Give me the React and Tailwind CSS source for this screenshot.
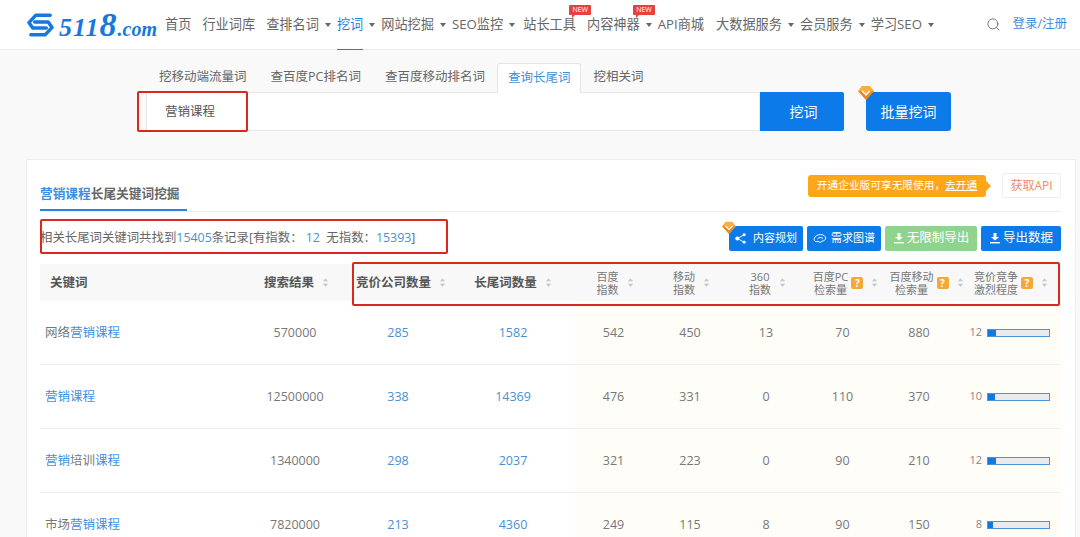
import { Search } from "lucide-react";

const navItems = [
  { label: "首页", mr: "mr-[11px]" },
  { label: "行业词库", mr: "mr-[11px]" },
  { label: "查排名词", caret: true },
  { label: "挖词", caret: true, active: true },
  { label: "网站挖掘", caret: true },
  { label: "SEO监控", caret: true, mr: "mr-[8px]" },
  { label: "站长工具", badge: true, mr: "mr-[11px]" },
  { label: "内容神器", caret: true, badge: true },
  { label: "API商城", mr: "mr-[12px]" },
  { label: "大数据服务", caret: true },
  { label: "会员服务", caret: true },
  { label: "学习SEO", caret: true },
];

const tabs = [
  { label: "挖移动端流量词" },
  { label: "查百度PC排名词" },
  { label: "查百度移动排名词" },
  { label: "查询长尾词", active: true },
  { label: "挖相关词" },
];

const rows = [
  { pre: "网络", hit: "营销课程", post: "", results: "570000", firms: "285", long: "1582", baidu: "542", mobile: "450", s360: "13", pc: "70", mob: "880", level: 12 },
  { pre: "", hit: "营销课程", post: "", results: "12500000", firms: "338", long: "14369", baidu: "476", mobile: "331", s360: "0", pc: "110", mob: "370", level: 10 },
  { pre: "", hit: "营销", post: "培训", hit2: "课程", results: "1340000", firms: "298", long: "2037", baidu: "321", mobile: "223", s360: "0", pc: "90", mob: "210", level: 12 },
  { pre: "市场", hit: "营销课程", post: "", results: "7820000", firms: "213", long: "4360", baidu: "249", mobile: "115", s360: "8", pc: "90", mob: "150", level: 8 },
];

const columns = "grid grid-cols-[205px_100px_106px_124px_77px_76px_76px_77px_76px_104px]";

function Diamond({ className }) {
  return (
    <svg viewBox="0 0 16 15" className={className}>
      <path d="M4 1h8l4 5-8 9-8-9z" fill="#f5b041" />
      <path d="M4 6l4 4 4-4" fill="none" stroke="#fff" strokeWidth="1.6" />
      <path d="M0 6l8 9 8-9-3 0-5 5-5-5z" fill="#e8872a" />
    </svg>
  );
}

function Caret() {
  return <span className="ml-[6px] h-0 w-0 border-x-[3px] border-t-[4px] border-x-transparent border-t-[#666]" />;
}

function NewBadge() {
  return (
    <span className="absolute left-[46px] top-[5px] h-[10px] w-[22px] rounded-[1px] bg-[#e8403f] text-center text-[7px] leading-[10px] text-white">
      NEW
      <span className="absolute left-[3px] top-[10px] h-0 w-0 border-r-[3px] border-t-[3px] border-r-transparent border-t-[#e8403f]" />
    </span>
  );
}

function Sort() {
  return (
    <svg viewBox="0 0 8 12" className="ml-[8px] h-[11px] w-[7px] shrink-0" fill="#c4c8cc">
      <path d="M4 1l3 3.5H1z" />
      <path d="M4 11L1 7.5h6z" />
    </svg>
  );
}

function Help() {
  return (
    <span className="ml-[3px] h-[12px] w-[12px] shrink-0 rounded-[2px] bg-[#f5a83a] text-center text-[10px] font-bold leading-[12px] text-white">?</span>
  );
}

function DownloadIcon() {
  return (
    <svg viewBox="0 0 12 12" className="mr-[2px] h-[12px] w-[12px]" fill="#fff">
      <path d="M4.500 1h3v4H10L6 8.600 2 5h2.500z" />
      <rect x="1" y="10" width="10" height="1.400" />
    </svg>
  );
}

function Bar({ level }) {
  const width = level === 12 ? "w-[8px]" : level === 10 ? "w-[7px]" : "w-[5px]";
  return (
    <div className="flex items-center">
      <span className="w-[30px] pr-[5px] text-right text-[11px] text-[#888]">{level}</span>
      <div className="h-[8px] w-[63px] border border-[#4a94dc] bg-[#e9eaec]">
        <div className={`h-full bg-[#0f78e6] ${width}`} />
      </div>
    </div>
  );
}

export default function App() {
  return (
    <div className="relative h-[537px] w-[1080px] overflow-hidden bg-[#f9f9f9] text-[#666] [font-family:'Open_Sans','Noto_Sans_CJK_SC',sans-serif]">
      {/* Header */}
      <header className="flex h-[50px] items-center border-b border-[#eceef0] bg-white pl-[26px] pr-[13px] text-[13.2px]">
        <svg viewBox="0 0 30 26" className="h-[26px] w-[29px]" fill="none" stroke="#1678dc" strokeWidth="3.600" strokeLinejoin="round" strokeLinecap="round">
          <path d="M25 3H10L3 10.500 7 16H21" />
          <path d="M5 23H20L27 15.500 23 10H9" />
        </svg>
        <div className="ml-[4px] flex w-[106px] items-baseline font-bold italic text-[#1678dc] [font-family:'Liberation_Serif',serif]">
          <span className="text-[26px] leading-none tracking-[1px]">511<span className="text-[34px] leading-none">8</span></span>
          <span className="text-[20px] leading-none">.com</span>
        </div>
        <nav className="flex h-full items-center">
          {navItems.map((item) => (
            <div
              key={item.label}
              className={`relative flex h-full items-center whitespace-nowrap ${item.mr || "mr-[6px]"} ${item.active ? "text-[#1f80e0]" : ""}`}
            >
              {item.label}
              {item.caret && <Caret />}
              {item.badge && <NewBadge />}
              {item.active && <span className="absolute bottom-[-1px] left-0 h-[1px] w-[26px] bg-[#1f80e0]" />}
            </div>
          ))}
        </nav>
        <Search className="ml-auto mr-[11px] h-[15px] w-[15px] text-[#666]" strokeWidth={1.4} />
        <span className="text-[12.5px] text-[#3f8fe0]">登录/注册</span>
      </header>

      {/* Search */}
      <section className="ml-[146px] flex w-[805px] flex-col pt-[12px]">
        <div className="flex h-[30px] items-stretch pl-[1px] pt-[1px] text-[12.5px]">
          {tabs.map((tab) => (
            <div
              key={tab.label}
              className={
                tab.active
                  ? "z-10 -mb-px flex items-center rounded-t-[3px] border border-b-0 border-[#e4e4e4] bg-white px-[10px] text-[#3f8fe0]"
                  : "flex items-center px-[12px]"
              }
            >
              {tab.label}
            </div>
          ))}
        </div>
        <div className="flex h-[39px]">
          <div className="flex w-[614px] items-center border border-[#e8e8e8] bg-white pl-[18px] pt-[2px] text-[12.5px] text-[#555]">营销课程</div>
          <button className="w-[84px] rounded-r-[2px] bg-[#0c7ae8] pl-[3px] text-[14px] text-white">挖词</button>
          <button className="relative ml-[22px] w-[85px] rounded-[3px] bg-[#0c7ae8] text-[14px] text-white">
            批量挖词
            <Diamond className="absolute left-[-8px] top-[-7px] h-[15px] w-[16px]" />
          </button>
        </div>
      </section>

      {/* Card */}
      <main className="ml-[26px] mt-[28px] w-[1050px] border border-[#eeeeee] bg-white pl-[13px] pr-[14px]">
        <div className="flex h-[52px] items-end justify-between border-b border-[#eeeeee]">
          <div className="flex h-[52px] w-[147px] items-end border-b-2 border-[#2b84e0] pb-[6px] text-[12.7px] font-bold">
            <span className="text-[#3f8fe0]">营销课程</span>
            <span>长尾关键词挖掘</span>
          </div>
          <div className="mb-[13px] flex items-center">
            <div className="relative flex h-[22px] w-[178px] items-center justify-center whitespace-nowrap rounded-[3px] bg-[#fca71a] text-[10.7px] text-white">
              <span>开通企业版可享无限使用，<span className="underline">去开通</span></span>
              <span className="absolute right-[-5px] h-0 w-0 border-y-[5px] border-l-[5px] border-y-transparent border-l-[#fca71a]" />
            </div>
            <div className="ml-[16px] flex h-[25px] w-[59px] items-center justify-center rounded-[2px] border border-[#eeeeee] text-[12px] text-[#ee8a6c]">获取API</div>
          </div>
        </div>

        <div className="flex h-[52px] items-center justify-between">
          <p className="text-[12.4px]">
            相关长尾词关键词共找到<span className="text-[#4a8fd3]">15405</span>条记录[有指数：<span className="text-[#4a8fd3]"> 12</span>&nbsp; 无指数：<span className="text-[#4a8fd3]">15393</span>]
          </p>
          <div className="flex gap-[4px] text-white">
            <button className="relative flex h-[25px] w-[74px] items-center justify-center rounded-[2px] bg-[#0c7ae8] text-[11px]">
              <svg viewBox="0 0 12 12" className="mr-[7px] h-[11px] w-[11px]" fill="#fff">
                <circle cx="2.500" cy="6" r="2.200" />
                <circle cx="10" cy="2" r="1.600" />
                <circle cx="10" cy="10" r="1.600" />
                <path d="M2.500 6L10 2M2.500 6L10 10" stroke="#fff" strokeWidth="1" />
              </svg>
              内容规划
              <Diamond className="absolute left-[-7px] top-[-5px] h-[13px] w-[14px]" />
            </button>
            <button className="flex h-[25px] w-[74px] items-center justify-center rounded-[2px] bg-[#0c7ae8] text-[11px]">
              <svg viewBox="0 0 16 12" className="mr-[4px] h-[11px] w-[14px]" fill="none" stroke="#fff" strokeWidth="1.100">
                <path d="M4 9.500C1.500 9.500 1 7.500 1.500 6 2 3.500 5 1.500 8.500 1.500c3.500 0 6 2 6 4 0 2-2 3.500-4.500 3.500L8 11 7 9.500z" />
                <path d="M5 6.500c1.500-2 5-2 6.500-.500" />
              </svg>
              需求图谱
            </button>
            <button className="flex h-[25px] w-[92px] items-center justify-center rounded-[2px] bg-[#8fd48c] text-[12.5px]">
              <DownloadIcon />
              无限制导出
            </button>
            <button className="flex h-[25px] w-[80px] items-center justify-center rounded-[2px] bg-[#0c7ae8] text-[12.5px]">
              <DownloadIcon />
              导出数据
            </button>
          </div>
        </div>

        {/* Table */}
        <div className={`${columns} h-[37px] items-center bg-[#f8f8f8] text-[11px] leading-[13px] text-[#777]`}>
          <div className="pl-[10px] text-[12.5px] font-bold text-[#555]">关键词</div>
          <div className="flex items-center justify-center pl-[3px] text-[12.5px] font-bold text-[#555]">搜索结果<Sort /></div>
          <div className="flex items-center justify-center pl-[6px] text-[12.5px] font-bold text-[#555]">竞价公司数量<Sort /></div>
          <div className="flex items-center justify-center text-[12.5px] font-bold text-[#555]">长尾词数量<Sort /></div>
          <div className="flex items-center justify-center pl-[3px] text-center">百度<br />指数<Sort /></div>
          <div className="flex items-center justify-center pl-[3px] text-center">移动<br />指数<Sort /></div>
          <div className="flex items-center justify-center pl-[3px] text-center">360<br />指数<Sort /></div>
          <div className="flex items-center justify-center whitespace-nowrap pl-[6px] text-center">百度PC<br />检索量<Help /><Sort /></div>
          <div className="flex items-center justify-center whitespace-nowrap pl-[15px] text-center">百度移动<br />检索量<Help /><Sort /></div>
          <div className="flex items-center justify-start whitespace-nowrap pl-[17px] text-center">竞价竞争<br />激烈程度<Help /><Sort /></div>
        </div>

        {rows.map((row) => (
          <div key={row.results} className={`${columns} h-[64px] border-b border-[#eeeeee] text-center text-[12.5px] text-[#777]`}>
            <div className="flex items-center pl-[5px] pt-[1px] text-left">
              {row.pre}
              <span className="text-[#3f8fe0]">{row.hit}</span>
              {row.post}
              {row.hit2 && <span className="text-[#3f8fe0]">{row.hit2}</span>}
            </div>
            <div className="flex items-center justify-center pt-[1px]">{row.results}</div>
            <div className="flex items-center justify-center pt-[1px] text-[#4a8fd3]">{row.firms}</div>
            <div className="flex items-center justify-center pt-[1px] text-[#4a8fd3]">{row.long}</div>
            <div className="flex items-center justify-center bg-[#fffdf8] pt-[1px]">{row.baidu}</div>
            <div className="flex items-center justify-center bg-[#fffdf8] pt-[1px]">{row.mobile}</div>
            <div className="flex items-center justify-center bg-[#fffdf8] pt-[1px]">{row.s360}</div>
            <div className="flex items-center justify-center bg-[#fffdf8] pt-[1px]">{row.pc}</div>
            <div className="flex items-center justify-center bg-[#fffdf8] pt-[1px]">{row.mob}</div>
            <div className="flex items-center bg-[#fffdf8]">
              <Bar level={row.level} />
            </div>
          </div>
        ))}
      </main>

      {/* Red annotation boxes drawn over the page */}
      <div className="absolute left-[137px] top-[91px] h-[41px] w-[111px] rounded-[2px] border-2 border-[#d9281e]" />
      <div className="absolute left-[40px] top-[219px] h-[35px] w-[408px] rounded-[2px] border-2 border-[#d9281e]" />
      <div className="absolute left-[352px] top-[262px] h-[44px] w-[708px] rounded-[2px] border-2 border-[#d9281e]" />
    </div>
  );
}
